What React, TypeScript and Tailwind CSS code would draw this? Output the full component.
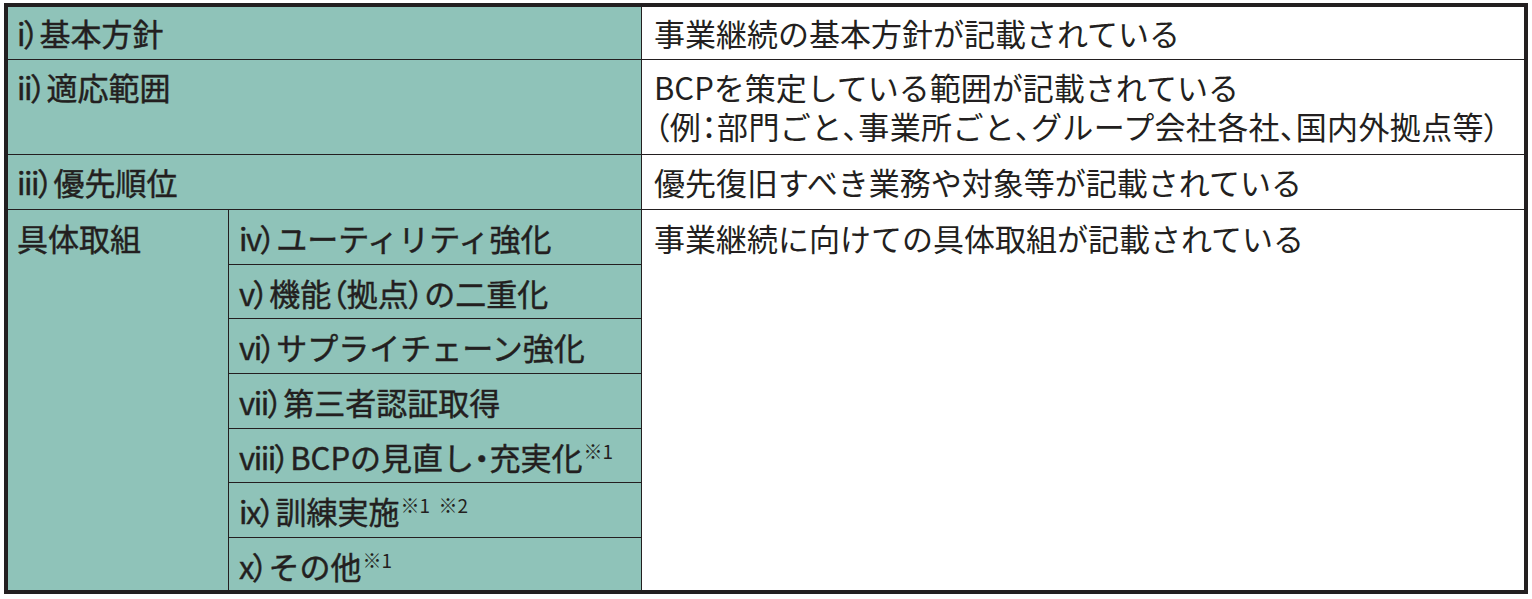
import type { ReactNode } from "react";

const font = "font-['Noto_Sans_CJK_JP','Noto_Sans',sans-serif]";

// punctuation packed to half width, as in the printed table
function P({ children }: { children: ReactNode }) {
  return <span className="[font-feature-settings:'palt']">{children}</span>;
}

function Note({ children }: { children: ReactNode }) {
  return (
    <sup className="relative -top-[11px] ml-[1px] align-baseline text-[19px] leading-none [-webkit-text-stroke:0px]">
      {children}
    </sup>
  );
}

function Label({ no, children }: { no: string; children: ReactNode }) {
  return (
    <span className="[-webkit-text-stroke:0.45px_#231f20]">
      <span className="tracking-[-1.5px]">{no}</span>
      <P>）</P>
      {children}
    </span>
  );
}

const subRows: { no: string; text: ReactNode; h: string }[] = [
  { no: "iv", text: "ユーティリティ強化", h: "h-[55px]" },
  {
    no: "v",
    text: (
      <>
        機能<P>（</P>拠点<P>）</P>の二重化
      </>
    ),
    h: "h-[54px]",
  },
  { no: "vi", text: "サプライチェーン強化", h: "h-[55px]" },
  { no: "vii", text: "第三者認証取得", h: "h-[55px]" },
  {
    no: "viii",
    text: (
      <>
        BCPの見直し<P>・</P>充実化<Note>※1</Note>
      </>
    ),
    h: "h-[54px]",
  },
  {
    no: "ix",
    text: (
      <>
        訓練実施<Note>※1&nbsp;&nbsp;※2</Note>
      </>
    ),
    h: "h-[55px]",
  },
  {
    no: "x",
    text: (
      <>
        その他<Note>※1</Note>
      </>
    ),
    h: "h-[52px]",
  },
];

export default function App() {
  return (
    <div className={`min-h-[599px] w-[1532px] bg-white pl-[4px] pt-[3px] ${font}`}>
      <div className="flex h-[591px] w-[1524px] flex-col border-4 border-[#231f20] text-[31px] leading-[39px] text-[#231f20]">
        {/* i) */}
        <div className="flex h-[53px] border-b border-[#231f20]">
          <div className="w-[634px] border-r border-[#231f20] bg-[#8fc3b9] pl-[9px] pt-[6px]">
            <Label no="i">基本方針</Label>
          </div>
          <div className="flex-1 pl-[12px] pt-[6px]">事業継続の基本方針が記載されている</div>
        </div>

        {/* ii) */}
        <div className="flex h-[95px] border-b border-[#231f20]">
          <div className="w-[634px] border-r border-[#231f20] bg-[#8fc3b9] pl-[9px] pt-[7px]">
            <Label no="ii">適応範囲</Label>
          </div>
          <div className="flex-1 pl-[12px] pt-[7px]">
            <div>BCPを策定している範囲が記載されている</div>
            <div className="whitespace-nowrap tracking-[0.35px]">
              <P>（</P>例<P>：</P>部門ごと<P>、</P>事業所ごと<P>、</P>グループ会社各社<P>、</P>国内外拠点等<P>）</P>
            </div>
          </div>
        </div>

        {/* iii) */}
        <div className="flex h-[55px] border-b border-[#231f20]">
          <div className="w-[634px] border-r border-[#231f20] bg-[#8fc3b9] pl-[9px] pt-[7px]">
            <Label no="iii">優先順位</Label>
          </div>
          <div className="flex-1 pl-[12px] pt-[7px]">優先復旧すべき業務や対象等が記載されている</div>
        </div>

        {/* 具体取組 */}
        <div className="flex flex-1">
          <div className="flex w-[634px] border-r border-[#231f20] bg-[#8fc3b9]">
            <div className="w-[221px] border-r border-[#231f20] pl-[9px] pt-[8px] [-webkit-text-stroke:0.45px_#231f20]">
              具体取組
            </div>
            <div className="flex flex-1 flex-col">
              {subRows.map((r, i) => (
                <div
                  key={r.no}
                  className={`${r.h} pl-[10px] pt-[8px] ${
                    i < subRows.length - 1 ? "border-b border-[#231f20]" : ""
                  }`}
                >
                  <Label no={r.no}>{r.text}</Label>
                </div>
              ))}
            </div>
          </div>
          <div className="flex-1 pl-[12px] pt-[8px]">事業継続に向けての具体取組が記載されている</div>
        </div>
      </div>
    </div>
  );
}
